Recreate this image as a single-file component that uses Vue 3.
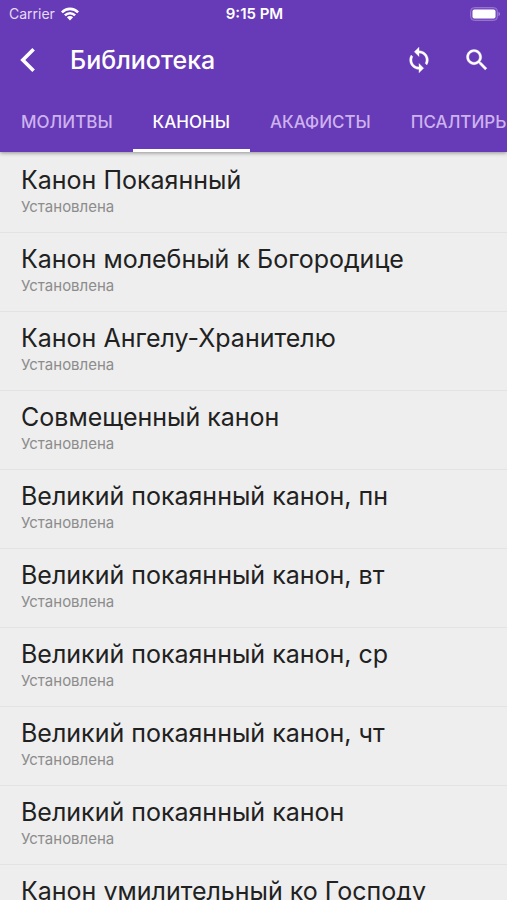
<template>
  <div class="library">

    <header class="app-header">

      <div class="status-bar">
        <div class="carrier">
          <span>Carrier</span>
          <svg class="wifi" viewBox="0 0 18 14" aria-hidden="true">
            <path d="M0 4.4 A12.6 12.6 0 0 1 18 4.4 L16.2 6.2 A10.1 10.1 0 0 0 1.8 6.2 Z" />
            <path d="M3 7.4 A8.4 8.4 0 0 1 15 7.4 L13.2 9.2 A5.9 5.9 0 0 0 4.8 9.2 Z" />
            <path d="M5.9 10.3 A4.3 4.3 0 0 1 12.1 10.3 L9 13.5 Z" />
          </svg>
        </div>
        <div class="time">9:15 PM</div>
        <div class="power">
          <svg class="battery" viewBox="0 0 30 14" aria-hidden="true">
            <rect x="0.5" y="0.5" width="27" height="13" rx="4" fill="#7a4ec1" stroke="#9674ce" />
            <rect x="2.5" y="2.5" width="23" height="9" rx="2" fill="#fff" />
            <path d="M28.5 4.8 Q30 5.5 30 7 Q30 8.5 28.5 9.2 Z" fill="#a78ad6" />
          </svg>
        </div>
      </div>

      <div class="toolbar">
        <button class="icon-btn" aria-label="Назад">
          <svg viewBox="0 0 28 28" aria-hidden="true">
            <path d="M19.6 3.2 L8.8 14 L19.6 24.8" fill="none" stroke="#fff" stroke-width="3.6" />
          </svg>
        </button>
        <h1 class="title">Библиотека</h1>
        <div class="actions">
          <button class="icon-btn" aria-label="Обновить">
            <svg viewBox="0 0 24 24" aria-hidden="true">
              <path fill="#fff" stroke="#fff" stroke-width="0.3" d="M12 4V1L8 5l4 4V6c3.31 0 6 2.69 6 6 0 1.01-.25 1.97-.7 2.8l1.46 1.46C19.54 15.03 20 13.57 20 12c0-4.42-3.58-8-8-8zm0 14c-3.31 0-6-2.69-6-6 0-1.01.25-1.97.7-2.8L5.24 7.74C4.46 8.97 4 10.43 4 12c0 4.42 3.58 8 8 8v3l4-4-4-4v3z" />
            </svg>
          </button>
          <button class="icon-btn" aria-label="Поиск">
            <svg viewBox="0 0 24 24" aria-hidden="true">
              <path fill="#fff" stroke="#fff" stroke-width="0.3" d="M15.5 14h-.79l-.28-.27C15.41 12.59 16 11.11 16 9.5 16 5.91 13.09 3 9.5 3S3 5.91 3 9.5 5.91 16 9.5 16c1.61 0 3.09-.59 4.23-1.57l.27.28v.79l5 4.99L20.49 19l-4.99-5zm-6 0C7.01 14 5 11.99 5 9.5S7.01 5 9.5 5 14 7.01 14 9.5 11.99 14 9.5 14z" />
            </svg>
          </button>
        </div>
      </div>

      <div class="tabs" role="tablist">
        <button
          v-for="tab in tabs"
          :key="tab"
          class="tab"
          :class="{ active: tab === activeTab }"
          role="tab"
          :aria-selected="tab === activeTab"
          @click="activeTab = tab"
        >
          {{ tab }}
        </button>
      </div>

    </header>

    <ul class="book-list">
      <li v-for="(book, index) in books" :key="index">
        <a class="book" href="#">
          <span class="book-title">{{ book }}</span>
          <span class="book-state">Установлена</span>
        </a>
      </li>
    </ul>

  </div>
</template>

<script setup>
import { ref } from 'vue'

const tabs = ['МОЛИТВЫ', 'КАНОНЫ', 'АКАФИСТЫ', 'ПСАЛТИРЬ']
const activeTab = ref('КАНОНЫ')

const books = [
  'Канон Покаянный',
  'Канон молебный к Богородице',
  'Канон Ангелу-Хранителю',
  'Совмещенный канон',
  'Великий покаянный канон, пн',
  'Великий покаянный канон, вт',
  'Великий покаянный канон, ср',
  'Великий покаянный канон, чт',
  'Великий покаянный канон',
  'Канон умилительный ко Господу'
]
</script>

<style>
body { margin: 0; background: #eee; }
</style>

<style scoped>
.library {
  height: 100vh; display: flex; flex-direction: column;
  background: #eee; color: #212121;
  font-family: Inter, Roboto, sans-serif;
}

.app-header {
  position: relative; z-index: 1; flex-shrink: 0;
  background: #673ab7; color: #fff;
  box-shadow: 0 1px 4px rgba(0, 0, 0, 0.4);
}

.status-bar {
  display: grid; grid-template-columns: 1fr auto 1fr; align-items: center;
  height: 27px; padding: 0 7px 0 9px; font-size: 15px;
}

.carrier { display: flex; align-items: center; gap: 6px; font-size: 14px; color: #e6dcf5; }
.wifi { width: 18px; height: 14px; fill: #fff; }
.time { font-weight: 600; }
.power { display: flex; justify-content: flex-end; }
.battery { width: 30px; height: 14px; }

button { padding: 0; border: none; background: none; font-family: inherit; cursor: pointer; }

.toolbar { display: flex; align-items: center; height: 65px; padding: 0 16px 0 14px; }
.icon-btn { display: flex; width: 28px; height: 28px; }
.icon-btn svg { width: 28px; height: 28px; }
.title { flex: 1; margin: 0 0 0 28px; font-size: 25px; font-weight: 500; line-height: 30px; }
.actions { display: flex; gap: 30px; }

.tabs { display: flex; height: 60px; padding-left: 1px; overflow: hidden; }

.tab {
  flex-shrink: 0; padding: 0 20px;
  border-top: 3px solid transparent; border-bottom: 3px solid transparent;
  font-size: 17px; font-weight: 500; color: #cdb3ee;
}
.tab.active { color: #fff; border-bottom-color: #fff; }

.book-list {
  flex: 1; margin: 0; padding: 2px 0 0; list-style: none;
  overflow-y: auto; scrollbar-width: none;
}

.book {
  display: flex; flex-direction: column; gap: 2px;
  padding: 11px 21px 16px; border-bottom: 1px solid #e3e3e3;
  color: inherit; text-decoration: none;
}
.book-title { font-size: 25px; line-height: 30px; white-space: nowrap; }
.book-state { font-size: 15px; line-height: 19px; color: #8c8c8c; }
</style>
